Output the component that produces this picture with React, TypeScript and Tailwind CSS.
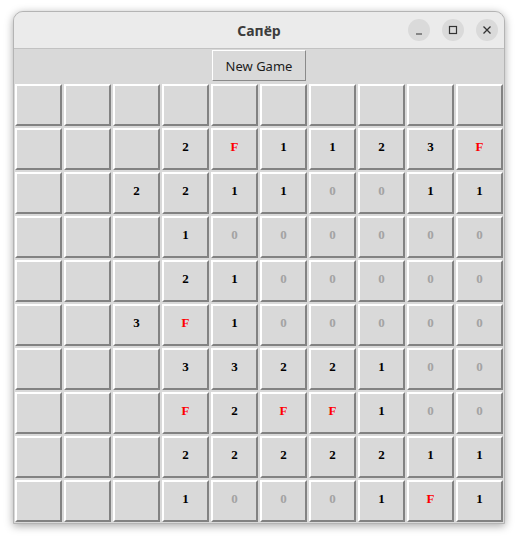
import React from 'react';

const BOARD: string[][] = [
  ['', '', '', '', '', '', '', '', '', ''],
  ['', '', '', '2', 'F', '1', '1', '2', '3', 'F'],
  ['', '', '2', '2', '1', '1', '0', '0', '1', '1'],
  ['', '', '', '1', '0', '0', '0', '0', '0', '0'],
  ['', '', '', '2', '1', '0', '0', '0', '0', '0'],
  ['', '', '3', 'F', '1', '0', '0', '0', '0', '0'],
  ['', '', '', '3', '3', '2', '2', '1', '0', '0'],
  ['', '', '', 'F', '2', 'F', 'F', '1', '0', '0'],
  ['', '', '', '2', '2', '2', '2', '2', '1', '1'],
  ['', '', '', '1', '0', '0', '0', '1', 'F', '1'],
];

function Cell({ value }: { value: string }) {
  const color =
    value === 'F' ? 'text-[#ff0000]' : value === '0' ? 'text-[#a3a3a3]' : 'text-black';
  return (
    <div className="w-[49px] h-[44px] p-px bg-[#d9d9d9]">
      <div
        className={`w-full h-full flex items-center justify-center border-2 border-t-white border-l-white border-b-[#828282] border-r-[#828282] bg-[#d9d9d9] text-[13px] font-bold pb-[5px] ${color}`}
        style={{ fontFamily: '"Liberation Serif", serif' }}
      >
        {value}
      </div>
    </div>
  );
}

export default function App() {
  return (
    <div className="w-[518px] h-[539px] bg-white pt-[11px] pl-[13px]">
      <div className="w-[492px] rounded-t-[10px] border border-[#b4b4b4] bg-[#d9d9d9] shadow-[0_2px_8px_rgba(0,0,0,0.35)] overflow-hidden">
        <div className="relative h-[37px] bg-[#ebebeb] border-b border-[#c2c2c2] flex items-center justify-center">
          <span
            className="text-[14px] font-bold text-[#3c3c3c]"
            style={{ fontFamily: '"Noto Sans", sans-serif' }}
          >
            Сапёр
          </span>
          <div className="absolute right-[6px] top-[7px] flex gap-[12px]">
            <div className="w-[22px] h-[22px] rounded-full bg-[#dadada] flex items-center justify-center">
              <svg width="10" height="10" viewBox="0 0 10 10">
                <path d="M2 9h6" stroke="#333" strokeWidth="1.2" />
              </svg>
            </div>
            <div className="w-[22px] h-[22px] rounded-full bg-[#dadada] flex items-center justify-center">
              <svg width="10" height="10" viewBox="0 0 10 10">
                <rect x="1.5" y="1.5" width="7" height="7" fill="none" stroke="#333" strokeWidth="1.2" />
              </svg>
            </div>
            <div className="w-[22px] h-[22px] rounded-full bg-[#dadada] flex items-center justify-center">
              <svg width="10" height="10" viewBox="0 0 10 10">
                <path d="M1.5 1.5l7 7M8.5 1.5l-7 7" stroke="#333" strokeWidth="1.3" />
              </svg>
            </div>
          </div>
        </div>
        <div className="h-[34px] flex justify-center pt-px">
          <button
            className="w-[94px] h-[31px] bg-[#d9d9d9] border border-t-white border-l-white border-b-[#8a8a8a] border-r-[#8a8a8a] text-[13px] text-[#1c1c1c] pt-[2px]"
            style={{ fontFamily: '"Noto Sans", sans-serif' }}
          >
            New Game
          </button>
        </div>
        <div className="grid grid-cols-10">
          {BOARD.map((row, r) =>
            row.map((v, c) => <Cell key={`${r}-${c}`} value={v} />)
          )}
        </div>
      </div>
    </div>
  );
}
